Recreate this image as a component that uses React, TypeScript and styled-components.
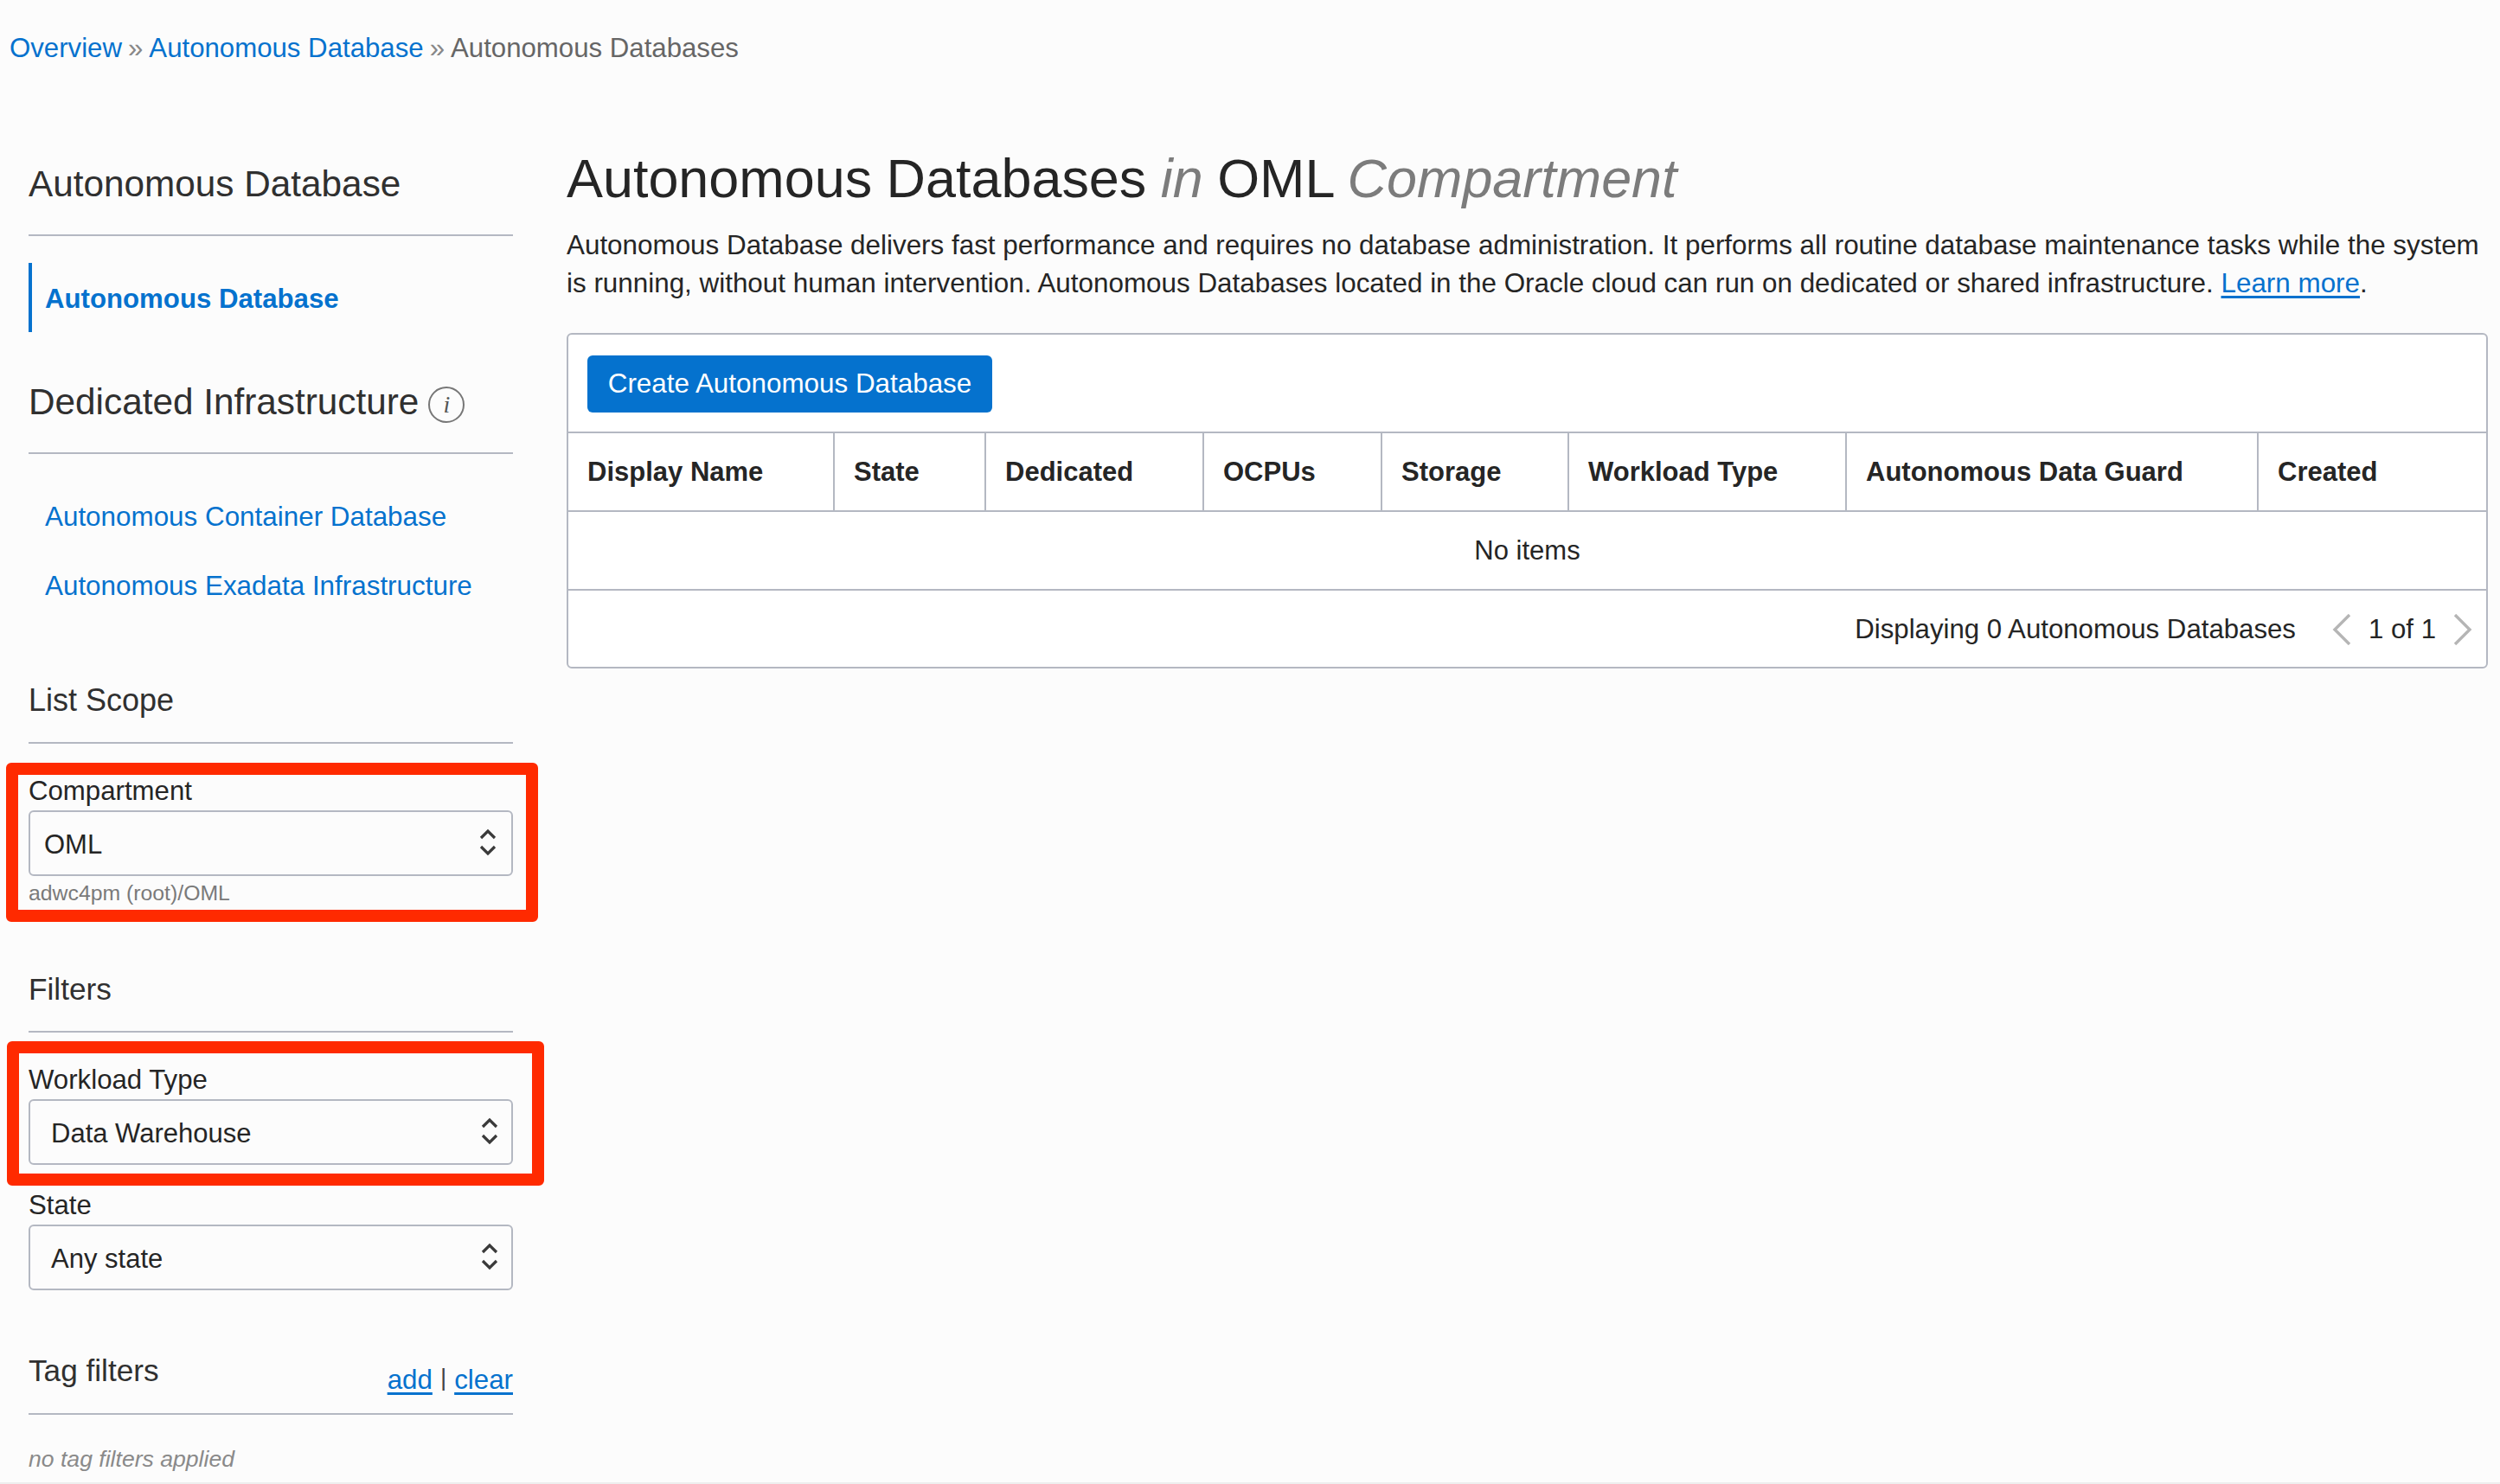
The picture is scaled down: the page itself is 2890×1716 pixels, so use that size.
import React from "react";
import styled, { createGlobalStyle } from "styled-components";

const GlobalStyle = createGlobalStyle`
  html, body {
    margin: 0;
    padding: 0;
    background: #fcfcfc;
    color: #252525;
    font-family: "Liberation Sans", Arial, sans-serif;
  }
`;

const Page = styled.div`
  width: 2890px;
  height: 1716px;
  box-sizing: border-box;
  border-bottom: 2px solid #eeeeee;
  overflow: hidden;
`;

const Breadcrumb = styled.nav`
  height: 110px;
  padding: 38px 0 0 11px;
  box-sizing: border-box;
  font-size: 31.2px;
  line-height: 36px;
  color: #666666;
`;

const Sep = styled.span`
  margin: 0 7px;
  color: #888888;
`;

const Link = styled.a<{ $underline?: boolean }>`
  color: #0572ce;
  text-decoration: ${({ $underline }) => ($underline ? "underline" : "none")};
  text-underline-offset: 4px;
`;

const Columns = styled.div`
  display: flex;
  padding-left: 33px;
`;

const Sidebar = styled.aside`
  width: 560px;
  flex: none;
`;

const Main = styled.main`
  width: 2221px;
  margin-left: 62px;
`;

const SideHeading = styled.div<{ $size?: number; $mt: number; $pb: number }>`
  display: flex;
  align-items: flex-start;
  margin-top: ${({ $mt }) => $mt}px;
  padding-top: 2px;
  padding-bottom: ${({ $pb }) => $pb - 2}px;
  border-bottom: 2px solid #b4b8c2;
  font-size: ${({ $size }) => $size ?? 42.3}px;
  line-height: ${({ $size }) => Math.round($size ?? 42.3)}px;
  color: #303030;
`;

const InfoBadge = styled.span`
  display: inline-flex;
  align-items: center;
  justify-content: center;
  width: 38px;
  height: 38px;
  margin: 3px 0 -3px 11px;
  border: 2px solid #777777;
  border-radius: 50%;
  font: italic 28px "Liberation Serif", serif;
  color: #555555;
`;

const ActiveItem = styled.div`
  margin-top: 31px;
  height: 80px;
  border-left: 4px solid #0572ce;
  padding: 3px 0 0 15px;
  box-sizing: border-box;
  display: flex;
  align-items: center;
  font-size: 31.2px;
  font-weight: 700;
  color: #0572ce;
`;

const NavList = styled.div`
  display: flex;
  flex-direction: column;
  gap: 44px;
  margin-top: 55px;
  padding-left: 19px;
  font-size: 31.4px;
  line-height: 36px;
`;

const Field = styled.div<{ $mt: number }>`
  position: relative;
  margin-top: ${({ $mt }) => $mt}px;
`;

const FieldLabel = styled.div`
  padding-top: 1px;
  font-size: 31.2px;
  line-height: 36px;
  color: #252525;
`;

const SelectBox = styled.div<{ $inset: number; $iconRight: number }>`
  display: flex;
  align-items: center;
  justify-content: space-between;
  box-sizing: border-box;
  height: 76px;
  margin-top: 4px;
  padding: 3px ${({ $iconRight }) => $iconRight}px 0 ${({ $inset }) => $inset}px;
  border: 2px solid #b4b8c2;
  border-radius: 6px;
  background: #fcfcfc;
  font-size: 31px;
  color: #252525;

  svg {
    margin-bottom: 6px;
  }
`;

const Hint = styled.div`
  margin-top: 5px;
  font-size: 24.8px;
  line-height: 30px;
  color: #7a7a7a;
`;

const Highlight = styled.div<{ $top: number; $right: number; $bottom: number; $left: number }>`
  position: absolute;
  top: ${({ $top }) => $top}px;
  right: ${({ $right }) => $right}px;
  bottom: ${({ $bottom }) => $bottom}px;
  left: ${({ $left }) => $left}px;
  border: 14px solid #ff2a00;
  border-radius: 6px;
  pointer-events: none;
`;

const TagActions = styled.span`
  display: flex;
  gap: 9px;
  margin: 11px 0 -11px auto;
  font-size: 31.3px;
  line-height: 36px;
`;

const Pipe = styled.span`
  margin-top: -3px;
  font-size: 28px;
  color: #444444;
`;

const EmptyNote = styled.div`
  margin-top: 36px;
  font-size: 26.6px;
  line-height: 30px;
  font-style: italic;
  color: #8a8a8a;
`;

const Title = styled.h1`
  margin: 58px 0 0;
  font-size: 62.9px;
  line-height: 76px;
  font-weight: 400;
  word-spacing: -1px;
  color: #252525;
`;

const TitleMuted = styled.em`
  color: #7c7c7c;
`;

const Intro = styled.p`
  margin: 18px 0 0;
  font-size: 31.4px;
  line-height: 44px;
  color: #252525;
`;

const TableCard = styled.section`
  margin-top: 35px;
  box-sizing: border-box;
  height: 388px;
  border: 2px solid #b4b8c2;
  border-radius: 6px;
  background: #ffffff;
`;

const Toolbar = styled.div`
  height: 112px;
  box-sizing: border-box;
  padding: 24px 0 0 22px;
`;

const PrimaryButton = styled.button`
  height: 66px;
  width: 468px;
  border: none;
  border-radius: 6px;
  background: #0572ce;
  color: #ffffff;
  font: 31.4px "Liberation Sans", Arial, sans-serif;
`;

const HeaderRow = styled.div`
  display: grid;
  grid-template-columns: 306px 175px 252px 206px 216px 321px 476px 1fr;
  height: 93px;
  box-sizing: border-box;
  border-top: 2px solid #b4b8c2;
  border-bottom: 2px solid #b4b8c2;
`;

const HeaderCell = styled.div`
  display: flex;
  align-items: center;
  padding-left: 22px;
  border-left: 2px solid #b4b8c2;
  font-size: 31px;
  font-weight: 700;
  color: #252525;

  &:first-child {
    border-left: none;
  }
`;

const EmptyRow = styled.div`
  display: flex;
  align-items: center;
  justify-content: center;
  height: 89px;
  box-sizing: border-box;
  font-size: 31px;
`;

const Footer = styled.div`
  display: flex;
  align-items: center;
  justify-content: flex-end;
  height: 92px;
  box-sizing: border-box;
  border-top: 2px solid #b4b8c2;
  padding-right: 16px;
  font-size: 31.2px;
`;

const PagerText = styled.span`
  margin: 0 20px;
`;

const PagerStart = styled.span`
  margin-right: 42px;
`;

const Chevrons = () => (
  <svg width="20" height="34" viewBox="0 0 20 34" fill="none" stroke="#3a3a3a" strokeWidth="3.2">
    <path d="M2 12 L10 4 L18 12" />
    <path d="M2 22 L10 30 L18 22" />
  </svg>
);

const PagerArrow = ({ dir }: { dir: "left" | "right" }) => (
  <svg width="22" height="36" viewBox="0 0 22 36" fill="none" stroke="#b5b5b5" strokeWidth="3.4">
    <path d={dir === "left" ? "M20 1 L3 18 L20 35" : "M2 1 L19 18 L2 35"} />
  </svg>
);

const columns = [
  "Display Name",
  "State",
  "Dedicated",
  "OCPUs",
  "Storage",
  "Workload Type",
  "Autonomous Data Guard",
  "Created",
];

export default function App() {
  return (
    <Page>
      <GlobalStyle />
      <Breadcrumb>
        <Link>Overview</Link>
        <Sep>»</Sep>
        <Link>Autonomous Database</Link>
        <Sep>»</Sep>
        Autonomous Databases
      </Breadcrumb>
      <Columns>
        <Sidebar>
          <SideHeading $mt={80} $pb={39}>Autonomous Database</SideHeading>
          <ActiveItem>Autonomous Database</ActiveItem>
          <SideHeading $mt={58} $pb={39}>
            Dedicated Infrastructure
            <InfoBadge>i</InfoBadge>
          </SideHeading>
          <NavList>
            <Link>Autonomous Container Database</Link>
            <Link>Autonomous Exadata Infrastructure</Link>
          </NavList>
          <SideHeading $size={36} $mt={94} $pb={32}>List Scope</SideHeading>
          <Field $mt={36}>
            <FieldLabel>Compartment</FieldLabel>
            <SelectBox $inset={16} $iconRight={17}>
              OML
              <Chevrons />
            </SelectBox>
            <Hint>adwc4pm (root)/OML</Hint>
            <Highlight $top={-14} $right={-29} $bottom={-18} $left={-26} />
          </Field>
          <SideHeading $size={35.2} $mt={76} $pb={33}>Filters</SideHeading>
          <Field $mt={36}>
            <FieldLabel>Workload Type</FieldLabel>
            <SelectBox $inset={24} $iconRight={15}>
              Data Warehouse
              <Chevrons />
            </SelectBox>
            <Highlight $top={-26} $right={-36} $bottom={-24} $left={-25} />
          </Field>
          <Field $mt={28}>
            <FieldLabel>State</FieldLabel>
            <SelectBox $inset={24} $iconRight={15}>
              Any state
              <Chevrons />
            </SelectBox>
          </Field>
          <SideHeading $size={35.2} $mt={73} $pb={33}>
            Tag filters
            <TagActions>
              <Link $underline>add</Link>
              <Pipe>|</Pipe>
              <Link $underline>clear</Link>
            </TagActions>
          </SideHeading>
          <EmptyNote>no tag filters applied</EmptyNote>
        </Sidebar>
        <Main>
          <Title>
            Autonomous Databases <TitleMuted>in</TitleMuted> OML <TitleMuted>Compartment</TitleMuted>
          </Title>
          <Intro>
            Autonomous Database delivers fast performance and requires no database administration. It performs all
            routine database maintenance tasks while the system is running, without human intervention. Autonomous
            Databases located in the Oracle cloud can run on dedicated or shared infrastructure.{" "}
            <Link $underline>Learn more</Link>.
          </Intro>
          <TableCard>
            <Toolbar>
              <PrimaryButton>Create Autonomous Database</PrimaryButton>
            </Toolbar>
            <HeaderRow>
              {columns.map((c) => (
                <HeaderCell key={c}>{c}</HeaderCell>
              ))}
            </HeaderRow>
            <EmptyRow>No items</EmptyRow>
            <Footer>
              <PagerStart>Displaying 0 Autonomous Databases</PagerStart>
              <PagerArrow dir="left" />
              <PagerText>1 of 1</PagerText>
              <PagerArrow dir="right" />
            </Footer>
          </TableCard>
        </Main>
      </Columns>
    </Page>
  );
}
